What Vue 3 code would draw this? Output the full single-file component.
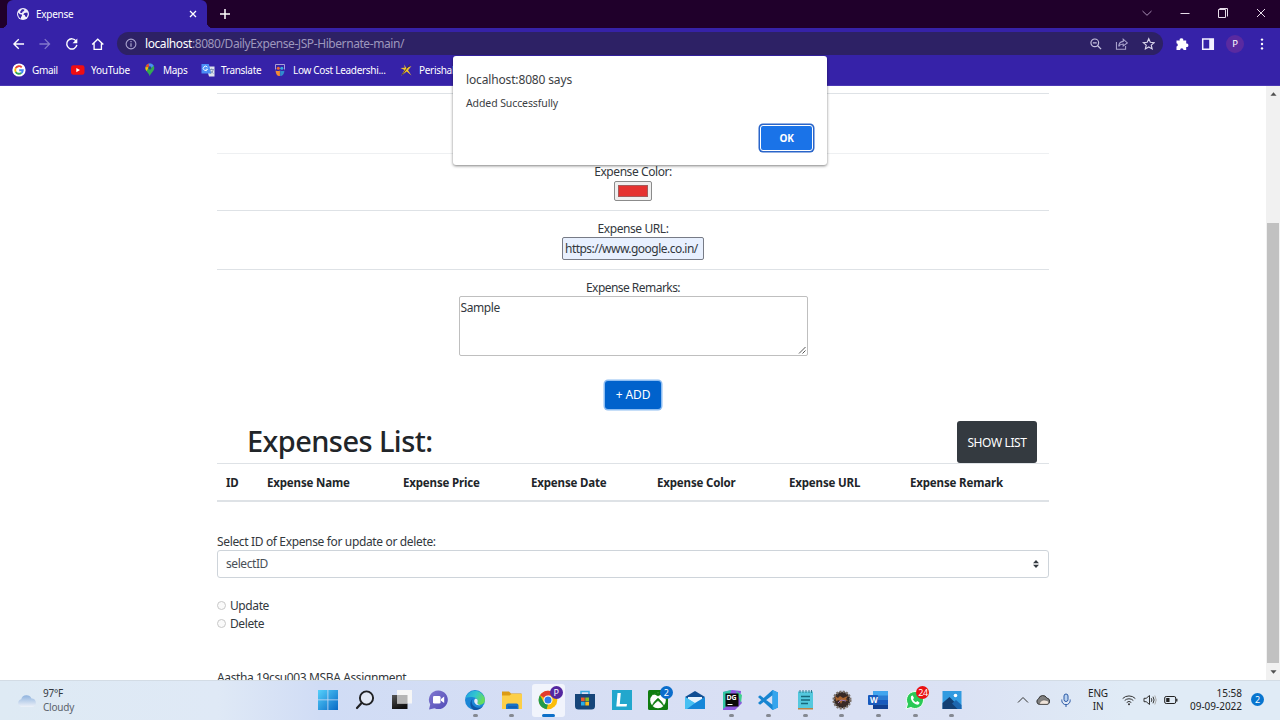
<script setup>
const bookmarks = [
  { icon: 'google', label: 'Gmail' },
  { icon: 'youtube', label: 'YouTube' },
  { icon: 'maps', label: 'Maps' },
  { icon: 'translate', label: 'Translate' },
  { icon: 'slides', label: 'Low Cost Leadershi...' },
  { icon: 'star', label: 'Perishab' },
]
const columns = [
  { label: 'ID', cls: 'c-id' },
  { label: 'Expense Name', cls: 'c-name' },
  { label: 'Expense Price', cls: 'c-price' },
  { label: 'Expense Date', cls: 'c-date' },
  { label: 'Expense Color', cls: 'c-color' },
  { label: 'Expense URL', cls: 'c-url' },
  { label: 'Expense Remark', cls: 'c-remark' },
]
</script>

<template>
  <div class="screen">
    <header class="chrome">
      <div class="tabstrip">
        <div class="tab">
          <svg class="globe" viewBox="0 0 12 12"><circle cx="6" cy="6" r="6" fill="#f1effa" /><path d="M1 4.5l2 1.8 1.8.3.2 1.5-1 .8v1.8C2 9.8.8 7.500 1 4.500zM5 1.200l2.300.2-.2 1.600-1.600.7-.4 1.200H3.600L3 4zM7.500 5l2.700-.5.6 1.500-1 3-1.600-.5-.4-1.500-1.600-.6z" fill="#3722a8" /></svg>
          <span class="tab-title">Expense</span>
          <svg class="tab-close" viewBox="0 0 8 8"><path d="M1 1l6 6M7 1L1 7" stroke="#fff" stroke-width="1.3" /></svg>
        </div>
        <svg class="plus" viewBox="0 0 10 10"><path d="M5 0v10M0 5h10" stroke="#fff" stroke-width="1.500" /></svg>
        <div class="window-controls">
          <svg viewBox="0 0 12 12"><path d="M1.500 4L6 8.300 10.500 4" fill="none" stroke="#a88fb5" /></svg>
          <svg viewBox="0 0 12 12"><path d="M1.500 6.500h9" stroke="#e6dce9" /></svg>
          <svg viewBox="0 0 12 12"><path d="M1.500 2.500h7v8h-7zM2.500 1.500h8v8" fill="none" stroke="#e6dce9" /></svg>
          <svg viewBox="0 0 12 12"><path d="M2 2l8 8M10 2l-8 8" stroke="#e6dce9" /></svg>
        </div>
      </div>

      <div class="toolbar">
        <div class="nav">
          <svg viewBox="0 0 14 14"><path d="M12.500 7H2M7 2L2 7l5 5" fill="none" stroke="#fff" stroke-width="1.400" /></svg>
          <svg viewBox="0 0 14 14"><path d="M1.500 7H12M7 2l5 5-5 5" fill="none" stroke="#8378cc" stroke-width="1.300" /></svg>
          <svg viewBox="0 0 14 14"><path d="M11.500 4A5.300 5.300 0 1 0 12.300 8" fill="none" stroke="#fff" stroke-width="1.500" /><path d="M12.800 1.200v5H7.800z" fill="#fff" /></svg>
          <svg viewBox="0 0 14 14"><path d="M1.200 7.500L7 2l5.800 5.500M3.200 6v6.500h7.600V6" fill="none" stroke="#fff" stroke-width="1.400" /></svg>
        </div>
        <div class="omnibox">
          <svg class="info" viewBox="0 0 12 12"><circle cx="6" cy="6" r="4.900" fill="none" stroke="#aaa4ce" stroke-width="1.100" /><path d="M6 5.200v3.500M6 3v1.200" stroke="#aaa4ce" stroke-width="1.200" /></svg>
          <div class="url"><b>localhost</b>:8080/DailyExpense-JSP-Hibernate-main/</div>
          <div class="omni-actions">
            <svg viewBox="0 0 14 14"><circle cx="6" cy="5.800" r="4" fill="none" stroke="#c6c1df" stroke-width="1.200" /><path d="M4 5.800h4M9 8.800l3.500 3.500" stroke="#c6c1df" stroke-width="1.400" /></svg>
            <svg viewBox="0 0 14 14"><path d="M1.500 5v7.500h9.500V9" fill="none" stroke="#aaa4ce" stroke-width="1.100" /><path d="M3.800 9.500c.3-3.500 2-5 4.700-5.200V2L12.800 5.800 8.500 9V7c-2 0-3.500.6-4.700 2.500z" fill="none" stroke="#aaa4ce" stroke-width="1.100" /></svg>
            <svg viewBox="0 0 14 14"><path d="M7 1.500l1.600 3.700 4 .4-3 2.600.9 3.900L7 10l-3.500 2.100.9-3.900-3-2.600 4-.4z" fill="none" stroke="#dad6eb" stroke-width="1.200" /></svg>
          </div>
        </div>
        <div class="extensions">
          <svg viewBox="0 0 14 14"><path d="M1.500 3.500h3.200a1.800 1.800 0 1 1 3.500 0h3v3a1.800 1.800 0 1 1 0 3.500v3H8.500a1.700 1.700 0 0 0-3.400 0H1.500V9.600a1.700 1.700 0 0 0 0-3.300z" fill="#fff" /></svg>
          <svg viewBox="0 0 14 14"><path d="M1.700 1.900h10.600v10.300H1.700z" fill="none" stroke="#f3f1ff" stroke-width="1.500" /><path d="M8.200 1.900h4v10.300h-4z" fill="#f3f1ff" /></svg>
          <span class="avatar">P</span>
          <svg viewBox="0 0 14 14"><g fill="#fff"><circle cx="7" cy="2.600" r="1.200" /><circle cx="7" cy="7" r="1.200" /><circle cx="7" cy="11.400" r="1.200" /></g></svg>
        </div>
      </div>

      <nav class="bookmarks">
        <div v-for="b in bookmarks" :key="b.label" class="bookmark" :class="'b-' + b.icon">
          <svg v-if="b.icon === 'google'" viewBox="0 0 14 14"><circle cx="7" cy="7" r="6.600" fill="#fff" /><g fill="none" stroke-width="1.900"><path d="M9.700 4.300A3.800 3.800 0 0 0 3.700 5.100" stroke="#ea4335" /><path d="M3.700 5.100a3.800 3.800 0 0 0 0 3.800" stroke="#fbbc05" /><path d="M3.700 8.900a3.800 3.800 0 0 0 5.700 1" stroke="#34a853" /><path d="M9.400 9.900A3.800 3.800 0 0 0 10.800 7.200H7.200" stroke="#4285f4" /></g></svg>
          <svg v-else-if="b.icon === 'youtube'" viewBox="0 0 14 14"><rect x="0" y="2.300" width="13.500" height="9.500" rx="2.300" fill="#f00d12" /><path d="M5.300 5v4.200L9 7.100z" fill="#fff" /></svg>
          <svg v-else-if="b.icon === 'maps'" viewBox="0 0 14 14"><path d="M6.800 13.500C6.300 10 2.300 8.600 2.300 5a4.500 4.500 0 0 1 9 0c0 3.600-4 5-4.500 8.500z" fill="#34a853" /><path d="M2.600 3.500A4.500 4.500 0 0 1 6 .6L7 5z" fill="#ea4335" /><path d="M5.500.7A4.500 4.500 0 0 1 10.700 2.800L7 6z" fill="#4a8bf5" /><path d="M2.400 4.300L6 4l-2.500 4C2.700 7 2.300 5.700 2.400 4.300z" fill="#fbbc05" /><circle cx="6.800" cy="4.900" r="1.600" fill="#2a4687" /></svg>
          <svg v-else-if="b.icon === 'translate'" viewBox="0 0 14 14"><path d="M5 3.500h8.500v10H8z" fill="#dfe3ed" /><path d="M.5 1h7.300l2.500 9.500H.5z" fill="#4b8df6" /><path d="M6.400 4.200a2.200 2.200 0 1 0 .2 2H4.700" fill="none" stroke="#fff" stroke-width=".9" /><path d="M8.800 6.500h4M10.700 5.500v1M12.200 6.500c-.3 2-1.500 3.300-3 4M9.500 8l3 2.500" fill="none" stroke="#7387a8" stroke-width=".8" /></svg>
          <svg v-else-if="b.icon === 'slides'" viewBox="0 0 14 14"><path d="M2.500 6.500V1.500h9v5" fill="none" stroke="#a9a0d6" /><circle cx="5.300" cy="5.300" r="1.500" fill="#ef6b30" /><circle cx="8.800" cy="5.300" r="1.500" fill="#35aee0" /><path d="M2.500 7.500c2 .8 3.200.8 4.400 0v5.500C4.500 13.500 3 11.500 2.500 7.500z" fill="#f28c35" /><path d="M7.200 7.500c2 .8 3.200.8 4.300 0-.2 3.500-1.700 5.500-4.300 5.500z" fill="#318ccd" /></svg>
          <svg v-else viewBox="0 0 14 14"><path d="M5 1.500l2.500 3.700L12.500 3 9 7.200l3.500 5.300-4.800-4-5.500 4.300 3.300-5.800L1.500 5l4.300-.2z" fill="#f3c72c" /><path d="M10.800 1.300L3 12" stroke="#42342b" stroke-width=".9" /></svg>
          <span>{{ b.label }}</span>
        </div>
      </nav>
    </header>

    <main class="viewport">
      <div class="page">
        <div class="row first"></div>
        <div class="row color-row"><label>Expense Color:</label><span class="color-input"><i></i></span></div>
        <div class="row url-row"><label>Expense URL:</label><span class="url-input">https://www.google.co.in/</span></div>
        <div class="remarks-row">
          <label>Expense Remarks:</label>
          <div class="textarea">Sample<svg viewBox="0 0 8 8"><path d="M1 7.500L7.500 1M4.500 7.500l3-3" stroke="#555" /></svg></div>
        </div>
        <div class="add-wrap"><button class="add">+ ADD</button></div>
        <div class="list-head"><h2>Expenses List:</h2><button class="show">SHOW LIST</button></div>
        <table>
          <thead><tr><th v-for="c in columns" :key="c.label" :class="c.cls">{{ c.label }}</th></tr></thead>
        </table>
        <div class="select-label">Select ID of Expense for update or delete:</div>
        <div class="select"><span>selectID</span><svg viewBox="0 0 6 8"><path d="M3 0l3 3.300H0zM3 8l3-3.300H0z" fill="#343a40" /></svg></div>
        <div class="radios">
          <div class="radio"><i></i><span>Update</span></div>
          <div class="radio"><i></i><span>Delete</span></div>
        </div>
        <p class="credit">Aastha 19csu003 MSBA Assignment</p>
      </div>
      <div class="scrollbar">
        <svg viewBox="0 0 8 4"><path d="M4 0l3.500 4h-7z" fill="#505050" /></svg>
        <div class="thumb"></div>
        <svg viewBox="0 0 8 4"><path d="M4 4L.5 0h7z" fill="#505050" /></svg>
      </div>
    </main>

    <footer class="taskbar">
      <div class="weather">
        <svg viewBox="0 0 20 14"><defs><linearGradient id="cloud" x2="0" y2="1"><stop stop-color="#8fb3de" /><stop offset="1" stop-color="#eef2f9" /></linearGradient></defs><path d="M4.500 13a4 4 0 0 1-.3-7.800A5.500 5.500 0 0 1 14.500 4.500 4.300 4.300 0 0 1 15.500 13z" fill="url(#cloud)" /></svg>
        <div><span class="temp">97°F</span><span class="cond">Cloudy</span></div>
      </div>

      <div class="apps">
        <div class="app"><svg viewBox="0 0 20 20"><defs><linearGradient id="win" x2="1" y2="1"><stop stop-color="#55d0fb" /><stop offset="1" stop-color="#0869c5" /></linearGradient></defs><path d="M0 0h9.500v9.500H0zM10.300 0H20v9.500h-9.700zM0 10.300h9.500V20H0zM10.300 10.300H20V20h-9.700z" fill="url(#win)" /></svg></div>
        <div class="app"><svg viewBox="0 0 20 20"><circle cx="11.500" cy="8" r="6.600" fill="#e2e8f5" stroke="#202124" stroke-width="1.900" /><path d="M6.800 12.800L2 18" stroke="#202124" stroke-width="2.200" stroke-linecap="round" /></svg></div>
        <div class="app"><svg viewBox="0 0 20 20"><defs><linearGradient id="tv" x2=".4" y2="1"><stop stop-color="#555" /><stop offset="1" stop-color="#111" /></linearGradient></defs><path d="M0 5h15.500v14H0z" fill="url(#tv)" /><path d="M5 0h15v13.500H5z" fill="#f6f6f6" /><path d="M5 5h10.500v8.500H5z" fill="#b5b5b5" /></svg></div>
        <div class="app"><svg viewBox="0 0 20 20"><defs><linearGradient id="chat" x2="1" y2="1"><stop stop-color="#8178cf" /><stop offset="1" stop-color="#514bb7" /></linearGradient></defs><path d="M10.500.5a9.300 9.300 0 1 1-4 17.700L1 19.500l1.200-5A9.300 9.300 0 0 1 10.500.500z" fill="url(#chat)" /><rect x="5" y="6" width="7.500" height="7.500" rx="1.300" fill="#fff" /><path d="M13 9l3.200-2.500v6.500L13 10.700z" fill="#fff" /></svg></div>
        <div class="app run"><svg viewBox="0 0 20 20"><defs><linearGradient id="edge" x2="1" y2=".4"><stop stop-color="#219de3" /><stop offset=".55" stop-color="#32c6cf" /><stop offset="1" stop-color="#65dc5c" /></linearGradient></defs><circle cx="10" cy="10" r="10" fill="#1b86d6" /><path d="M.2 9A10 10 0 0 1 20 10c0 3.200-2.500 4.700-5.300 4.700-2 0-3.200-.8-2.700-1.800 1.300-2 .2-5.400-3.700-5.700C4 6.800.8 7.500.2 9z" fill="url(#edge)" /><path d="M8.300 8.200c-3.300 3-1.300 9 4.700 9.500 2.300.2 4-.6 5.300-2A10 10 0 0 1 9 20C4.500 18 4 11 8.300 8.200z" fill="#0d55a5" /><path d="M10 8.800c1.900-.5 3.400 1.400 2.500 3.400-.5 1.500.6 2.700 3 2.700-3.500 1.600-8.200-2.500-5.500-6.100z" fill="#e4eafa" /></svg></div>
        <div class="app run"><svg viewBox="0 0 20 20"><path d="M0 1.500h7l2 2H19.500V9H0z" fill="#dc9b14" /><path d="M0 5.500h7.500l2-1.500H20v15H0z" fill="#fccf48" /><path d="M4 19v-3.500a2 2 0 0 1 2-2h8.500a2 2 0 0 1 2 2V19z" fill="#1672c7" /><path d="M6 17h9" stroke="#0c4fa0" stroke-width="1" /></svg></div>
        <div class="app active"><svg viewBox="0 0 20 20"><circle cx="10" cy="10" r="9.300" fill="#fbbd0a" /><path d="M10 10L1.900 5.300A9.300 9.300 0 0 1 18 5.500H10z" fill="#e33b2e" /><path d="M1.900 5.300L6 12.400 10 14.300l-1.400 5A9.300 9.300 0 0 1 1.900 5.300z" fill="#229a4b" /><circle cx="10" cy="10" r="4.500" fill="#fff" /><circle cx="10" cy="10" r="3.500" fill="#307be9" /></svg><b class="badge purple">P</b></div>
        <div class="app"><svg viewBox="0 0 20 20"><path d="M6 5V1.500h8V5" fill="none" stroke="#38aae2" stroke-width="1.500" /><path d="M0 4h20v12a3.500 3.500 0 0 1-3.500 3.500h-13A3.500 3.500 0 0 1 0 16z" fill="#164579" /><path d="M6 7.500h3.700v3.700H6z" fill="#ef5a2c" /><path d="M10.300 7.500H14v3.700h-3.700z" fill="#8abd26" /><path d="M6 11.800h3.700v3.700H6z" fill="#28aee8" /><path d="M10.300 11.800H14v3.700h-3.700z" fill="#f8bc1b" /></svg></div>
        <div class="app"><svg viewBox="0 0 20 20"><path d="M0 0h20v20H0z" fill="#22a7cd" /><path d="M5.500 3h3.300l-1 11H15l-.4 2.500H4.300z" fill="#fff" /></svg></div>
        <div class="app"><svg viewBox="0 0 20 20"><rect width="20" height="20" rx="1.500" fill="#107c10" /><circle cx="10" cy="10.500" r="7.800" fill="#fff" /><path d="M5 4.200C7 3.800 9 5.200 10 6c1-.8 3-2.200 5-1.800-1.500-1-3.300-1.500-5-1-1.700-.5-3.500 0-5 1zM10 8.300c3 2.500 5.300 5.200 5.800 8-1.500-2.200-3.600-4.300-5.800-5.800-2.200 1.500-4.300 3.600-5.800 5.800.5-2.800 2.800-5.500 5.800-8z" fill="#107c10" stroke="#107c10" stroke-width=".7" /></svg><b class="badge blue">2</b></div>
        <div class="app"><svg viewBox="0 0 20 20"><path d="M0 7l10-6 10 6-10 7z" fill="#124f93" /><path d="M3 7h14v3l-7 5-7-5z" fill="#e8f3fc" /><path d="M0 7l10 6.500V19H0z" fill="#33b1ee" /><path d="M20 7L0 19h20z" fill="#1687d8" /><path d="M0 7l10 6-8 6H0z" fill="#48c0f3" /></svg></div>
        <div class="app run"><svg viewBox="0 0 20 20"><path d="M1 2l9-2 9 1-1 8 2 4-7 7H1z" fill="#8b57df" /><path d="M1 2l8-2-3 15-5 4z" fill="#32c7a4" /><path d="M14 1l6 4-1 8z" fill="#3ed08e" /><path d="M3.500 3.500h13v13h-13z" fill="#090909" /><path d="M5.500 14.500h5" stroke="#fff" stroke-width="1" /></svg><b class="dg">DG</b></div>
        <div class="app run"><svg viewBox="0 0 20 20"><path d="M14.500 0L20 2.500v15L14.500 20 0 7l2-1.800L14.500 14.800V5.200L2 14.800 0 13z" fill="#1785d1" /><path d="M14.500 0L20 2.500v15L14.500 20z" fill="#35a5ed" /></svg></div>
        <div class="app run"><svg viewBox="0 0 20 20"><path d="M3 1.500h15V18H3z" fill="#54c8de" /><path d="M5 0v3M8 0v3M11 0v3M14 0v3M16.500 0v3" stroke="#317e91" /><path d="M6 6.500h9M6 10h9M6 13.500h7" stroke="#17687c" stroke-width="1.300" /><path d="M3 18h15v1.500H3z" fill="#bb8345" /></svg></div>
        <div class="app run"><svg viewBox="0 0 20 20"><circle cx="10" cy="10" r="8.300" fill="#2d2523" stroke="#7b7068" stroke-width="2.500" stroke-dasharray="2 1.300" /><circle cx="10" cy="10" r="6.700" fill="#392a26" /><path d="M3 6l3 2 2-2 3 2 5-2-2 3 2 2-5-1-2 4-2-4-3 1z" fill="#a96530" /><path d="M6 13l3-3 5 1" stroke="#9f7ab4" fill="none" /></svg></div>
        <div class="app run"><svg viewBox="0 0 20 20"><path d="M5 1h15v18H5z" fill="#41a5ee" /><path d="M5 5.500h15V10H5z" fill="#2b7cd3" /><path d="M5 10h15v4.500H5z" fill="#185abd" /><path d="M5 14.500h15V19H5z" fill="#103f91" /><rect y="5" width="10" height="10" rx="1" fill="#185abd" /></svg><b class="word">W</b></div>
        <div class="app run"><svg viewBox="0 0 20 20"><path d="M10 1.500a8.500 8.500 0 1 1-4 16L1 19l1.500-5A8.500 8.500 0 0 1 10 1.500z" fill="#29c956" stroke="#f3fff4" /><path d="M6.200 6l1.500-.5L9 8 8 9.200c.7 1.500 1.500 2.200 3 3l1.200-1.100 2.300 1.300c-.2 2-1.500 2.500-3 2.100C8.300 13.700 4.800 9.500 6.200 6z" fill="#fff" /></svg><b class="badge red">24</b></div>
        <div class="app run"><svg viewBox="0 0 20 20"><path d="M.5 1h19v18H.5z" fill="#319be0" /><path d="M.5 13L7.500 7l12 12H.5z" fill="#123f73" /><path d="M10 13.500l4-3.500 5.500 5v4h-4z" fill="#1c66af" /><circle cx="13.500" cy="5.500" r="1.800" fill="#fff" /></svg></div>
      </div>

      <div class="tray">
        <svg class="t-up" viewBox="0 0 12 12"><path d="M1 8.500L6 3.500l5 5" fill="none" stroke="#333" /></svg>
        <svg class="t-cloud" viewBox="0 0 14 12"><path d="M3.500 10.500A3 3 0 0 1 2.600 4.800a4.400 4.400 0 0 1 8.200-.8A3.300 3.300 0 0 1 11 10.500z" fill="#808080" stroke="#333" /><path d="M3.500 10.300C3.500 6.500 8 5 11.500 6.800c1.800.9 1.300 3.500-.5 3.500z" fill="#f0e4da" stroke="#555" stroke-width=".6" /></svg>
        <svg class="t-mic" viewBox="0 0 12 14"><rect x="4" y="1" width="4" height="7.500" rx="2" fill="#b8d1f0" stroke="#2b59a5" /><path d="M1.800 6.500v1a4.200 4.200 0 0 0 8.400 0v-1M6 11.700V14" fill="none" stroke="#2b59a5" /></svg>
        <div class="lang"><span>ENG</span><span>IN</span></div>
        <svg class="t-wifi" viewBox="0 0 14 12"><g fill="none" stroke="#333"><path d="M.7 4.500a9 9 0 0 1 12.600 0M2.700 6.500a6.200 6.200 0 0 1 8.600 0M4.700 8.500a3.300 3.300 0 0 1 4.600 0" /></g><circle cx="7" cy="10.200" r="1" fill="#333" /></svg>
        <svg class="t-vol" viewBox="0 0 14 12"><g fill="none" stroke="#333"><path d="M1 4.300h2.200L6.500 1.500v9L3.200 7.700H1z" /><path d="M8.300 4.200q1.200 1.800 0 3.600M10 2.700q2.200 3.300 0 6.600" /><path d="M11.800 1.500q2.800 4.500 0 9" stroke="#aaa" /></g></svg>
        <svg class="t-bat" viewBox="0 0 14 12"><rect x=".7" y="2.500" width="11" height="7" rx="1.500" fill="none" stroke="#222" /><path d="M2.200 4h3.300v4H2.200z" fill="#222" /><path d="M12.800 4.700v2.700" stroke="#222" stroke-width="1.300" /></svg>
        <div class="clock"><span>15:58</span><span>09-09-2022</span></div>
        <b class="notif">2</b>
      </div>
    </footer>

    <div class="dialog">
      <div class="dialog-title">localhost:8080 says</div>
      <div class="dialog-text">Added Successfully</div>
      <button class="ok">OK</button>
    </div>
  </div>
</template>

<style>
html, body { margin: 0; overflow: hidden; }
</style>

<style scoped>
* { box-sizing: border-box; }
.screen { position: relative; width: 1280px; height: 720px; overflow: hidden; display: flex; flex-direction: column; background: #fff; font-family: "Noto Sans", "Open Sans", sans-serif; font-size: 12px; line-height: 18px; color: #33383d; white-space: nowrap; }
svg { display: block; flex: none; }
button { font: inherit; padding: 0; }

.chrome { height: 86px; background: #3622a8; border-bottom: 1px solid #4b38b5; color: #fff; flex: none; }
.tabstrip { height: 28px; background: #20002b; display: flex; align-items: center; }
.tab { width: 200px; height: 28px; margin-left: 7px; background: #3622a8; border-radius: 6px 6px 0 0; display: flex; align-items: center; padding: 0 10px; position: relative; }
.tab::before, .tab::after { content: ""; position: absolute; bottom: 0; width: 6px; height: 6px; }
.tab::before { left: -6px; background: radial-gradient(circle at 0 0, transparent 6px, #3622a8 6.500px); }
.tab::after { right: -6px; background: radial-gradient(circle at 100% 0, transparent 6px, #3622a8 6.500px); }
.globe { width: 12px; height: 12px; }
.tab-title { margin-left: 7px; font-size: 10px; letter-spacing: -.28px; flex: 1; }
.tab-close { width: 8px; height: 8px; }
.plus { width: 10px; height: 10px; margin-left: 13px; }
.window-controls { margin-left: auto; margin-right: 13px; display: flex; gap: 26px; padding-bottom: 2px; }
.window-controls svg { width: 12px; height: 12px; }
.toolbar { height: 31px; display: flex; align-items: center; padding-left: 11.500px; }
.nav { display: flex; gap: 13px; width: 105.500px; flex: none; }
.nav svg { width: 13.500px; height: 14px; }
.omnibox { width: 1046px; height: 23px; border-radius: 12px; background: #2d2165; display: flex; align-items: center; padding: 0 8px; flex: none; }
.info { width: 12px; height: 12px; }
.url { margin-left: 8px; flex: 1; color: #9d97bd; font-size: 12px; letter-spacing: -.42px; }
.url b { font-weight: 400; color: #fff; }
.omni-actions { display: flex; gap: 13px; }
.omni-actions svg { width: 13.500px; height: 14px; }
.extensions { display: flex; align-items: center; gap: 12px; margin-left: 12px; }
.extensions svg { width: 14px; height: 14px; }
.avatar { width: 18px; height: 18px; border-radius: 50%; background: #5a2aa0; font-size: 9.500px; line-height: 18px; text-align: center; margin: 0 -1px; }
.bookmarks { height: 26px; padding-left: 12px; display: grid; grid-template-columns: 59px 72px 58px 72px 126px auto; align-items: center; padding-bottom: 4px; }
.bookmark { display: flex; align-items: center; gap: 6px; font-size: 10px; letter-spacing: -.3px; }
.bookmark svg { width: 14px; height: 14px; }
.b-youtube { letter-spacing: -.22px; }

.viewport { height: 594px; flex: none; display: flex; overflow: hidden; }
.page { width: 832px; margin-left: 217px; padding-top: 7px; height: 594px; overflow: hidden; }
.row { border-top: 1px solid #dee2e6; display: flex; flex-direction: column; align-items: center; padding-top: 9px; }
.first { height: 60px; }
.color-row { height: 57px; border-color: #eef0f2; }
.url-row { height: 59px; }
label { display: block; height: 18px; letter-spacing: -.42px; }
.remarks-row label { letter-spacing: -.54px; height: 17px; }
.color-input { width: 38px; height: 20px; border: 1px solid #8b8b8b; background: #efefef; border-radius: 2px; padding: 3px; }
.color-input i { display: block; height: 12px; background: #e53230; border: 1px solid #a35b5b; }
.url-row label { height: 17px; }
.url-input { width: 142px; height: 23px; border: 1px solid #777b86; border-radius: 2px; background: #e8f0fe; padding: 2px 0 0 2px; letter-spacing: -.53px; }
.remarks-row { border-top: 1px solid #dee2e6; height: 111px; padding-top: 9px; display: flex; flex-direction: column; align-items: center; }
.textarea { width: 349px; height: 60px; border: 1px solid #bfbfbf; border-radius: 2px; padding: 2px 1px; position: relative; letter-spacing: -.4px; }
.textarea svg { position: absolute; right: 1px; bottom: 1px; width: 8px; height: 8px; }
.add-wrap { display: flex; justify-content: center; height: 41px; }
.add { width: 56px; height: 28px; border: 0; border-radius: 3px; background: #0062cc; color: #fff; box-shadow: 0 0 0 1.500px #8dbdf2; margin-top: 1px; letter-spacing: -.1px; }
.list-head { height: 42px; display: flex; justify-content: space-between; padding: 0 12px 0 30px; }
h2 { margin: 0; font-size: 29px; font-weight: 500; line-height: 40px; letter-spacing: -.57px; color: #212529; }
.show { width: 80px; height: 42px; border: 0; border-radius: 3px; background: #343a40; color: #fff; letter-spacing: -.38px; padding-top: 1px; }
table { table-layout: fixed; width: 832px; height: 39px; border-collapse: separate; border-spacing: 0; border-top: 1px solid #dee2e6; border-bottom: 2px solid #dee2e6; }
th { text-align: left; padding: 2px 0 0 9px; font-weight: 700; font-size: 11.500px; letter-spacing: -.16px; color: #212529; }
.c-id { width: 41px; }
.c-name { width: 136px; }
.c-price { width: 128px; }
.c-date { width: 126px; }
.c-color { width: 132px; }
.c-url { width: 121px; }
.select-label { margin-top: 31px; height: 17px; letter-spacing: -.35px; }
.select { height: 28px; border: 1px solid #ced4da; border-radius: 3px; display: flex; align-items: center; justify-content: space-between; padding: 0 9px 0 8px; color: #495057; letter-spacing: -.42px; }
.select svg { width: 6px; height: 8px; }
.radios { margin-top: 19px; }
.radio { height: 18px; display: flex; align-items: center; gap: 4px; letter-spacing: -.4px; }
.radio i { width: 9px; height: 9px; border-radius: 50%; border: 1px solid #c8c8c8; background: #fafafa; margin-bottom: 2px; }
.credit { margin: 36px 0 0; letter-spacing: -.38px; }
.scrollbar { width: 14px; margin-left: 217px; background: #f1f1f1; display: flex; flex-direction: column; align-items: center; padding: 6px 0; flex: none; }
.scrollbar svg { width: 7px; height: 4px; }
.thumb { width: 12px; height: 440px; margin: 127px 0 auto; background: #c1c1c1; flex: none; }

.taskbar { height: 40px; position: relative; display: flex; align-items: center; background: linear-gradient(90deg, #deeaf4 0, #dfe9f6 17%, #d0dcf5 25%, #d8dff4 50%, #dbe2f4 75%, #e0ebf6 88%); border-top: 1px solid #d3dce5; }
.weather { width: 310px; padding-left: 17px; display: flex; align-items: center; gap: 6px; flex: none; }
.weather > svg { width: 20px; height: 14px; }
.weather div span { display: block; font-size: 10px; line-height: 13.500px; letter-spacing: -.2px; }
.weather .cond { color: #5b626b; }
.apps { display: grid; grid-template-columns: repeat(18, 36.680px); height: 39px; padding-bottom: 1px; flex: none; }
.app { position: relative; display: flex; justify-content: center; align-items: center; }
.app > svg { width: 20px; height: 20px; }
.app.run::after { content: ""; position: absolute; bottom: 2px; left: 16px; width: 5px; height: 3px; border-radius: 2px; background: #858992; }
.app.active::before { content: ""; position: absolute; inset: 3px 2px 2px 2px; border-radius: 3px; background: #f1f4fc; }
.app.active::after { content: ""; position: absolute; bottom: 2px; left: 12px; width: 13px; height: 3px; border-radius: 2px; background: #0e70c8; }
.app.active > svg { position: relative; }
.badge { position: absolute; z-index: 1; top: 5px; right: 4px; width: 13px; height: 13px; border-radius: 50%; color: #fff; font-size: 9px; line-height: 13px; font-weight: 400; text-align: center; }
.badge.purple { background: #5427a0; }
.badge.blue { background: #0b6dcb; }
.badge.red { background: #ea1212; letter-spacing: -.4px; }
.dg, .word { position: absolute; color: #fff; font-weight: 700; line-height: 10px; }
.dg { font-size: 7px; top: 12px; left: 13px; }
.word { font-size: 8px; top: 14px; left: 10px; }
.tray { margin-left: auto; display: grid; grid-template-columns: 19px 22px 24px 40px 22px 20px 21px 61px 22px; justify-items: center; align-items: center; padding: 0 16px 2px 0; color: #222; }
.tray svg { width: 14px; height: 12px; }
.tray .t-up { width: 12px; }
.tray .t-mic { width: 12px; height: 14px; }
.lang span, .clock span { display: block; font-size: 10px; line-height: 13px; letter-spacing: -.2px; }
.clock span { letter-spacing: -.02px; }
.lang { text-align: center; }
.clock { text-align: right; justify-self: end; }
.notif { width: 13px; height: 13px; border-radius: 50%; background: #0875cf; color: #fff; font-size: 9px; line-height: 13px; font-weight: 400; text-align: center; justify-self: end; }

.dialog { position: absolute; left: 453px; top: 56px; width: 374px; height: 109px; background: #fff; border-radius: 3px; box-shadow: 0 1px 3px rgba(0, 0, 0, .5); padding: 15px 13px; color: #3b3e43; }
.dialog-title { font-size: 12px; line-height: 18px; letter-spacing: -.15px; }
.dialog-text { font-size: 10.500px; line-height: 16px; margin-top: 6px; letter-spacing: -.1px; }
.ok { display: block; margin: 14px 1px 0 auto; width: 53px; height: 26px; border: 1px solid #fff; border-radius: 3px; background: #1a73e8; box-shadow: 0 0 0 1.500px #2a65c9; color: #fff; font-size: 10px; line-height: 22px; font-weight: 700; letter-spacing: -.3px; }
</style>
